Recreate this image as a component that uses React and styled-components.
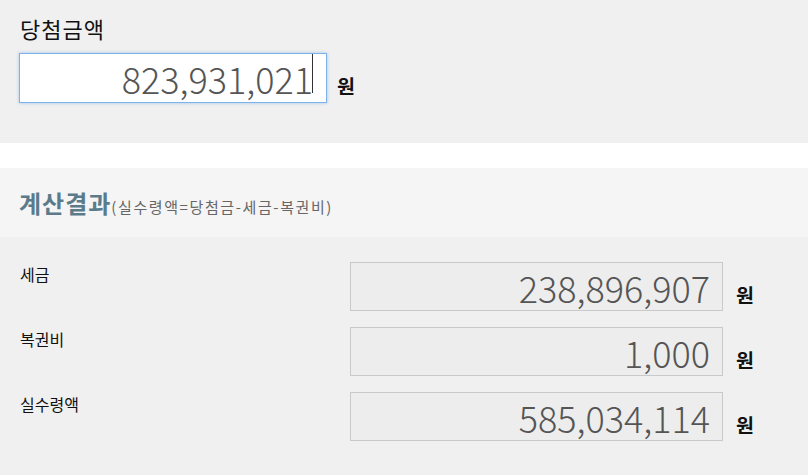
import React from "react";
import styled, { createGlobalStyle } from "styled-components";

const Global = createGlobalStyle`
  html, body { margin: 0; padding: 0; background: #f0f0f0; }
  body { font-family: "Noto Sans CJK KR", "Noto Sans", sans-serif; color: #111; }
  * { box-sizing: border-box; }
`;

const Page = styled.div`
  width: 808px;
  height: 475px;
  display: flex;
  flex-direction: column;
  background: #f0f0f0;
  overflow: hidden;
`;

const TopSection = styled.section`
  height: 143px;
  background: #f0f0f0;
  padding: 12px 0 0 19px;
`;

const TopLabel = styled.div`
  font-size: 22px;
  line-height: 33px;
  padding-left: 1px;
  letter-spacing: 1px;
  color: #111;
`;

const Row = styled.div`
  display: flex;
  align-items: baseline;
  margin-top: ${(p) => p.$mt || 0}px;
`;

const AmountBox = styled.div`
  width: ${(p) => p.$w}px;
  height: ${(p) => p.$h}px;
  display: flex;
  align-items: center;
  justify-content: flex-end;
  padding-right: ${(p) => p.$pr}px;
  font-size: 36px;
  font-weight: 300;
  line-height: 1;
  color: #555;
  background: ${(p) => (p.$active ? "#fff" : "#ededed")};
  border: 1px solid ${(p) => (p.$active ? "#7db3e8" : "#c9c9c9")};
  box-shadow: ${(p) => (p.$active ? "0 0 3px rgba(90,155,225,0.55)" : "none")};
`;

const Caret = styled.span`
  display: inline-block;
  width: 1px;
  height: 39px;
  margin-left: -1px;
  background: #333;
  align-self: flex-start;
`;

const Unit = styled.span`
  font-size: 19.5px;
  font-weight: 700;
  color: #111;
  margin-left: ${(p) => p.$ml}px;
`;

const WhiteBand = styled.div`
  height: 25px;
  background: #fff;
`;

const Header = styled.div`
  height: 69px;
  background: #f5f5f5;
  display: flex;
  align-items: center;
  padding: 0 0 0 19px;
`;

const Title = styled.h2`
  margin: 0;
  font-size: 24px;
  font-weight: 700;
  color: #5b7b8b;
  letter-spacing: 1px;
`;

const Formula = styled.span`
  font-size: 15px;
  font-weight: 400;
  color: #666;
  letter-spacing: 1.6px;
  margin-left: 0;
`;

const Content = styled.div`
  flex: 1;
  background: #f0f0f0;
  padding: 25px 0 0 20px;
  display: flex;
  flex-direction: column;
  gap: 16px;
`;

const ResultRow = styled.div`
  display: flex;
  align-items: baseline;
`;

const RowLabel = styled.div`
  width: 330px;
  font-size: 16px;
  align-self: flex-start;
  line-height: 24px;
  color: #111;
`;

const rows = [
  { label: "세금", value: "238,896,907" },
  { label: "복권비", value: "1,000" },
  { label: "실수령액", value: "585,034,114" },
];

export default function App() {
  return (
    <Page>
      <Global />
      <TopSection>
        <TopLabel>당첨금액</TopLabel>
        <Row $mt={8}>
          <AmountBox $w={308} $h={50} $pr={13} $active>
            823,931,021
            <Caret />
          </AmountBox>
          <Unit $ml={10}>원</Unit>
        </Row>
      </TopSection>
      <WhiteBand />
      <Header>
        <Title>
          계산결과<Formula>(실수령액=당첨금-세금-복권비)</Formula>
        </Title>
      </Header>
      <Content>
        {rows.map((r) => (
          <ResultRow key={r.label}>
            <RowLabel>{r.label}</RowLabel>
            <AmountBox $w={373} $h={49} $pr={12}>
              {r.value}
            </AmountBox>
            <Unit $ml={13}>원</Unit>
          </ResultRow>
        ))}
      </Content>
    </Page>
  );
}
